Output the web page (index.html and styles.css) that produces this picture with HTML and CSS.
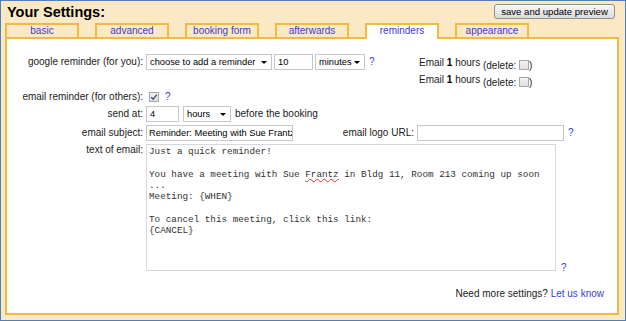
FILE: index.html
```html
<!DOCTYPE html>
<html>
	<head>
		<meta charset="UTF-8">
		<title>Your Settings</title>
		<link rel="stylesheet" href="styles.css">
	</head>
	<body>
		<div class="page">
			<div class="header">
				<h1 class="title">Your Settings:</h1>
				<button class="save-btn" type="button">save and update preview</button>
			</div>
			<ul class="tabs">
				<li>basic</li>
				<li>advanced</li>
				<li>booking form</li>
				<li>afterwards</li>
				<li class="active">reminders</li>
				<li>appearance</li>
			</ul>
			<div class="panel">
				<div class="form">
					<!-- google reminder -->
					<div class="lbl">google reminder (for you):</div>
					<div class="field span2">
						<span class="dropdown w-choose">choose to add a reminder<i class="arrow"></i></span>
						<span class="box w-10">10</span>
						<span class="dropdown w-min">minutes<i class="arrow"></i></span>
						<a href="javascript:;" class="help gap">?</a>
					</div>
					<div class="existing">
						<div>Email <b>1</b> hours <span class="del">(delete: <span class="check"></span>)</span></div>
						<div>Email <b>1</b> hours <span class="del">(delete: <span class="check"></span>)</span></div>
					</div>

					<!-- email reminder -->
					<div class="lbl mid">email reminder (for others):</div>
					<div class="field span3 mid">
						<span class="check on"><svg width="8" height="8" viewBox="0 0 8 8"><path d="M1.2 4.2 L3.2 6.2 L6.8 1.6" fill="none" stroke="#3a4c78" stroke-width="1.3"/></svg></span>
						<a href="javascript:;" class="help">?</a>
					</div>

					<div class="lbl">send at:</div>
					<div class="field span3 wide">
						<span class="box w-4">4</span>
						<span class="dropdown w-hours">hours<i class="arrow"></i></span>
						<span>before the booking</span>
					</div>

					<div class="lbl">email subject:</div>
					<div class="field">
						<input class="text-in w-subj" type="text" value="Reminder: Meeting with Sue Frantz">
					</div>
					<div class="lbl">email logo URL:</div>
					<div class="field wide">
						<input class="text-in w-logo" type="text" value="">
						<a href="javascript:;" class="help">?</a>
					</div>

					<div class="lbl top">text of email:</div>
					<div class="field span3 bottom">
						<div class="textbox">Just a quick reminder!

You have a meeting with Sue <span class="typo">Frantz</span> in Bldg 11, Room 213 coming up soon
...
Meeting: {WHEN}

To cancel this meeting, click this link:
{CANCEL}</div>
						<a href="javascript:;" class="help q-end">?</a>
					</div>
				</div>
				<p class="footer">Need more settings? <a href="javascript:;">Let us know</a></p>
			</div>
		</div>
	</body>
</html>
```

FILE: styles.css
```css
* {
	margin: 0;
	padding: 0;
	box-sizing: border-box;
}
body {
	font-family: "Liberation Sans", Arial, sans-serif;
	font-size: 10px;
	color: #1a1a1a;
}
.page {
	width: 626px;
	height: 321px;
	border: 1px solid #4f80bb;
	background: #fbe8c5;
	padding: 0 6px 5px 4px;
	display: flex;
	flex-direction: column;
}
.header {
	height: 22px;
	display: flex;
	justify-content: space-between;
	align-items: flex-start;
	padding: 3px 4px 0 2px;
}
.title {
	font-size: 14.5px;
	line-height: 17px;
	font-weight: bold;
	color: #000;
}
.save-btn {
	width: 121px;
	height: 15px;
	border: 1px solid #8e9090;
	border-radius: 3px;
	background: linear-gradient(#f7f7f7, #dcdcdc);
	font-family: "Liberation Sans", Arial, sans-serif;
	font-size: 9.6px;
	line-height: 13px;
	color: #000;
}

/* tabs */
.tabs {
	display: flex;
	gap: 16px;
	height: 14px;
	list-style: none;
}
.tabs li {
	width: 74px;
	height: 14px;
	border: 2px solid #f2b944;
	border-bottom: 0;
	text-align: center;
	line-height: 12px;
	color: #3b3bdc;
	cursor: pointer;
}
.tabs li.active {
	background: #fff;
	height: 16px;
	margin-bottom: -2px;
	position: relative;
}

.panel {
	flex: 1;
	background: #fff;
	border: 2px solid #f2b944;
	display: flex;
	flex-direction: column;
}
.form {
	display: grid;
	grid-template-columns: 136px 148px 117px 1fr;
	column-gap: 3px;
	row-gap: 3px;
	padding-top: 15px;
}
.lbl {
	text-align: right;
	line-height: 16px;
	white-space: nowrap;
}
.lbl.mid,
.lbl.top {
	line-height: 12px;
}
.field {
	display: flex;
	align-items: flex-start;
	gap: 2px;
	line-height: 16px;
}
.field.wide {
	gap: 4px;
	align-items: center;
}
.field.mid {
	align-items: center;
	gap: 6px;
	padding-left: 3px;
	height: 12px;
}
.field.bottom {
	align-items: flex-end;
	gap: 5px;
}
.span2 {
	grid-column: span 2;
}
.span3 {
	grid-column: span 3;
}

.help {
	color: #3b3bdc;
	text-decoration: none;
}
.help.gap {
	margin-left: 2px;
}
.help.q-end {
	line-height: 12px;
	margin-bottom: -3px;
}

/* form controls */
.dropdown,
.box,
.text-in {
	height: 16px;
	border: 1px solid #c3c7ce;
	background: #fff;
	font-family: "Liberation Sans", Arial, sans-serif;
	font-size: 9.3px;
	line-height: 14px;
	color: #000;
	padding-left: 3px;
}
.dropdown {
	display: flex;
	justify-content: space-between;
	align-items: center;
	padding-right: 4px;
}
.arrow {
	width: 0;
	height: 0;
	border-left: 3px solid transparent;
	border-right: 3px solid transparent;
	border-top: 3px solid #000;
}
.w-choose { width: 126px; }
.w-min { width: 50px; }
.w-hours { width: 48px; }
.w-10 { width: 39px; }
.w-4 { width: 33px; }
.w-subj { width: 147px; }
.w-logo { width: 147px; }
.text-in {
	outline: none;
	padding-left: 2px;
}

.check {
	display: inline-block;
	width: 10px;
	height: 10px;
	border: 1px solid #a8a8a8;
	background: linear-gradient(#f2f2f2, #e0e0e0);
	vertical-align: -1px;
}
.check svg {
	display: block;
}

.existing {
	padding-left: 2px;
	line-height: 17px;
	white-space: nowrap;
}
.existing b {
	color: #000;
}
.del {
	position: relative;
	top: 3px;
}

.textbox {
	width: 410px;
	height: 127px;
	border: 1px solid #d5d8de;
	padding: 1px 2px;
	font-family: "Liberation Mono", "Courier New", monospace;
	font-size: 9.3px;
	line-height: 11.35px;
	color: #333;
	white-space: pre;
	overflow: hidden;
}
.typo {
	text-decoration: underline wavy #e03030;
	text-decoration-thickness: 1px;
}

.footer {
	margin-top: 17px;
	text-align: right;
	padding-right: 13px;
	line-height: 12px;
}
.footer a {
	color: #3b3bdc;
	text-decoration: none;
}
```
